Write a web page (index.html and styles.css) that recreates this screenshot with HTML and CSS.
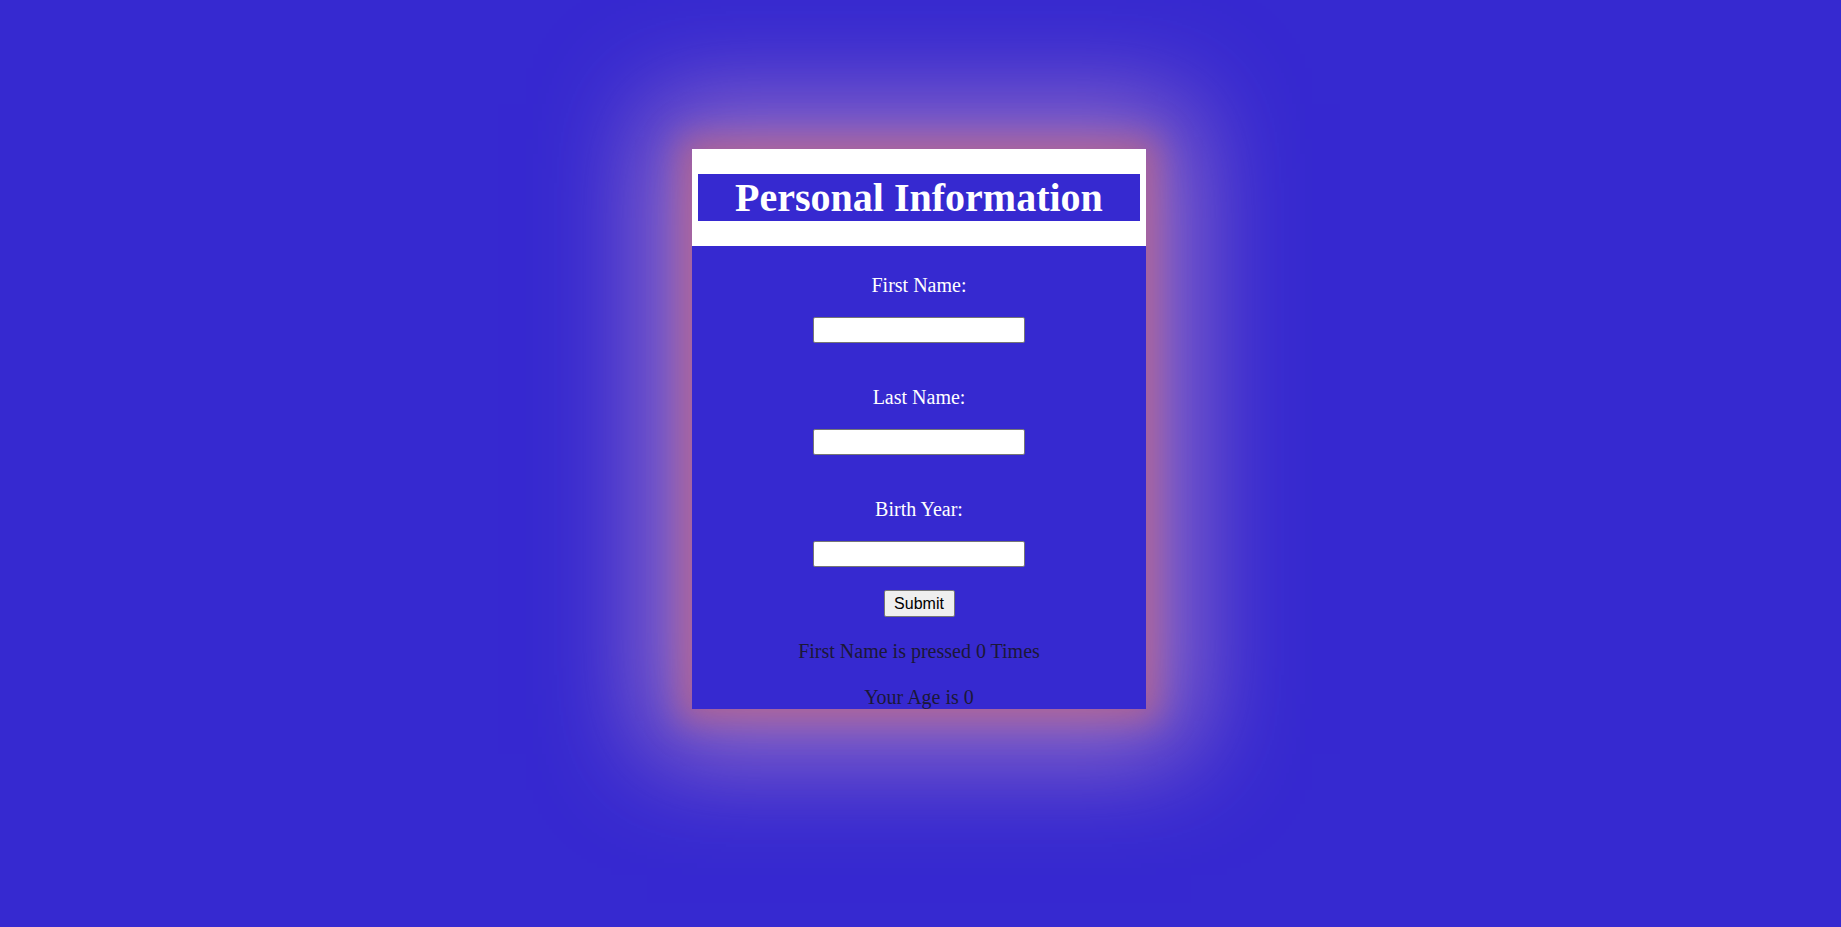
FILE: index.html
```html
<!DOCTYPE html>
<html lang="en">
<head>
<meta charset="utf-8">
<title>Personal Information</title>
<link rel="stylesheet" href="styles.css">
</head>
<body>
<div class="page">
  <div class="card">
    <div class="card-header">
      <h1 class="title">Personal Information</h1>
    </div>
    <form class="card-body" onsubmit="return false;">
      <div class="field">
        <label class="label" for="fn">First Name:</label>
        <input class="input" id="fn" type="text">
      </div>
      <div class="field">
        <label class="label" for="ln">Last Name:</label>
        <input class="input" id="ln" type="text">
      </div>
      <div class="field">
        <label class="label" for="by">Birth Year:</label>
        <input class="input" id="by" type="text">
      </div>
      <button class="submit" type="submit">Submit</button>
      <p class="result">First Name is pressed 0 Times</p>
      <p class="result">Your Age is 0</p>
    </form>
  </div>
</div>
</body>
</html>
```

FILE: styles.css
```css
html, body {
  margin: 0;
  padding: 0;
}

body {
  background: #3629d0;
  font-family: "Liberation Serif", "Times New Roman", serif;
  min-height: 927px;
}

.page {
  padding: 149px 0 0 0;
  display: flex;
  justify-content: center;
}

.card {
  width: 454px;
  height: 560px;
  margin-left: -3px;
  background: #3629d0;
  display: flex;
  flex-direction: column;
  box-shadow:
    0 0 30px 12px rgba(190, 100, 130, 0.7),
    0 0 100px 45px rgba(200, 150, 195, 0.7);
}

.card-header {
  background: #ffffff;
  padding: 25px 6px 25px 6px;
}

.title {
  margin: 0;
  background: #3629d0;
  color: #ffffff;
  font-family: "Liberation Serif", "Times New Roman", serif;
  font-weight: bold;
  font-size: 40px;
  line-height: 47px;
  text-align: center;
}

.card-body {
  display: flex;
  flex-direction: column;
  align-items: center;
  padding-top: 28px;
  margin: 0;
}

.field {
  display: flex;
  flex-direction: column;
  align-items: center;
}

.field + .field {
  margin-top: 43px;
}

.label {
  color: #ffffff;
  font-size: 20px;
  line-height: 23px;
  margin-bottom: 20px;
}

.input {
  box-sizing: border-box;
  width: 212px;
  height: 26px;
  margin: 0 0 0 -1px;
  background: #ffffff;
  border: 1px solid #767676;
  border-radius: 2px;
  padding: 1px 2px;
  font-family: "Liberation Sans", Arial, sans-serif;
  font-size: 16px;
}

.submit {
  box-sizing: border-box;
  margin-top: 23px;
  width: 71px;
  height: 27px;
  padding: 0;
  background: #efefef;
  border: 1px solid #767676;
  border-radius: 2px;
  color: #000000;
  font-family: "Liberation Sans", Arial, sans-serif;
  font-size: 16px;
  line-height: 25px;
}

.result {
  margin: 23px 0 0 0;
  color: #1b1838;
  font-size: 20px;
  line-height: 23px;
}
```
